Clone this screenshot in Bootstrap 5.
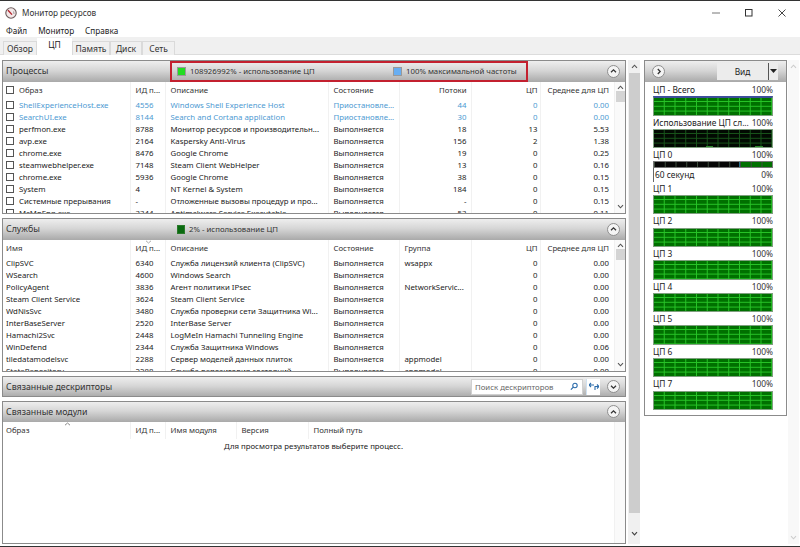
<!DOCTYPE html>
<html lang="ru">
<head>
<meta charset="utf-8">
<title>Монитор ресурсов</title>
<link href="https://cdn.jsdelivr.net/npm/bootstrap@5.3.0/dist/css/bootstrap.min.css" rel="stylesheet">
<style>
html,body{width:800px;height:547px;overflow:hidden;background:#fff}
body{font-family:"Noto Sans","Liberation Sans",sans-serif;font-size:7.8px;line-height:12px;color:#222;border-top:1.5px solid #333;border-bottom:1.5px solid #333}
.win-title{height:23px;padding:0 14px 0 5px;font-size:8.2px;color:#333}
.win-title svg{display:block}
.app-mark{margin-right:5px}
.win-btns{gap:25px}
.win-menu{height:13px;padding-left:6px;gap:11px;font-size:8.2px}
.tab-strip{height:18px;background:#f0f0f0;border-bottom:1px solid #dcdcdc;padding-left:3px}
.tab-strip .nav-tabs{border:0;height:18px;align-items:flex-end;flex-wrap:nowrap}
.tab-strip .nav-link{height:14px;border:1px solid #dadada;border-bottom:0;border-radius:0;margin:0;padding:0;color:#333;font-size:8.5px;line-height:13px;background:#f0f0f0;text-align:center}
.tab-strip .nav-link.active{height:18px;background:#fff;color:#222;border-color:#fff;line-height:12px;padding-bottom:3px;margin-bottom:-1px}
.tw1{width:34px}.tw2{width:35px}.tw3{width:38px}.tw4{width:32px}.tw5{width:33px}
.work{height:489px;padding-top:5px}
.left-pane{width:640px;padding-left:2px;border-right:1px solid #555}
.sec-stack{width:624px;gap:4px}
.sect{border:1px solid #8b8b8b;background:#fff;overflow:hidden;flex:none}
.sect-a{height:154px}.sect-b{height:153.5px}.sect-c{height:21px}.sect-d{flex:1 1 auto}
.sect-head{height:20.5px;background:linear-gradient(#eeeeee,#d6d6d6 45%,#a9a9a9);padding-right:5px;flex:none}
.sect-name{font-size:8.8px;padding-left:3px;width:167px;color:#333;flex:none}
.legend-box{width:358px;height:21px;border:2px solid transparent;padding-left:5px;flex:none;color:#333}
.legend-hot{border-color:#c3202f}
.legend-item{width:216px;gap:4px}
.swatch{width:9px;height:9px;border:1px solid #999;flex:none}
.sw-green{background:#22dc22}
.sw-blue{background:#68aef2}
.sw-dark{background:#0a6a10;border-color:#2a7a2a;width:8px}
.round-btn{width:13px;height:13px;border-radius:50%;border:1px solid #8e8e8e;background:#f4f4f4;flex:none}
.round-btn svg{display:block;margin:2.5px auto}
.sect-body{position:relative;overflow:hidden;flex:1 1 auto;min-height:0}
.tbl-wrap{width:611px;overflow:hidden;flex:none}
.rtab{table-layout:fixed;width:611px;--bs-table-bg:transparent;margin:0;font-size:7.8px;color:#222}
.rtab th,.rtab td{padding:0 0 0 5px;height:12.1px;line-height:12px;white-space:nowrap;overflow:hidden;border-right:1px solid #f1f1f1;color:inherit;font-weight:400;vertical-align:middle}
.rtab th:last-child,.rtab td:last-child{border-right:0}
.rtab thead th{height:17px;padding-bottom:1px;color:#333;position:relative}
.rtab th:first-child,.rtab td:first-child{padding-left:3px}
.rtab .ra{text-align:right;padding-left:0}
.rtab .pa{padding-right:4px}.rtab .pb{padding-right:2px}.rtab .pc{padding-right:5px}
.rtab .form-check-input{width:8px;height:8px;margin:0 5px 0 0;border:1px solid #555;border-radius:0;vertical-align:-1px;float:none}
.rtab tr.sus td{color:#4d9ad2}
.col1{width:127px}.col2{width:35px}.col3{width:163px}.col4{width:71px}.col5{width:72px}.col6{width:69px}.col7{width:74px}
.mcol3{width:71px}.mcol4{width:72px}
.sbar{width:12px;background:#fafafa;border-left:1px solid #f1f1f1;flex:none;padding-top:3px}
.sbar svg{display:block;margin:0 auto}
.sbar-thumb{width:10px;height:11px;background:#d4d4d4;margin:1px auto 0}
.sbar-end{margin-top:auto;padding-bottom:4px}
.hint{height:12px;padding-left:221px;margin-top:1px;color:#222}
.sort-mark{position:absolute;display:block;top:0}
.sm-a{left:14px}.sm-b{left:61px}
.search-box{width:112px;height:16px;background:#fff;border:1px solid #d0d0d0;margin-right:3px}
.search-box .form-control{height:14px;border:0;border-radius:0;background:transparent;padding:0 0 0 3px;font-size:7.8px;line-height:12px;min-height:0;box-shadow:none;color:#555}
.search-box .form-control::placeholder{color:#666;opacity:1}
.swap-btn{width:14px;height:16px;background:#fff;border-left:1px solid #cfe0ef;margin-right:7px;flex:none}
.outer-bar{width:12px;margin-left:2px;background:#f0f0f0;flex:none}
.outer-track{background:#cdcdcd;width:11px;flex:1 1 auto;margin:4px 0 18px}
.right-pane{width:159px;padding-left:4px;flex:none}
.mon{width:143px;height:356px;border:1px solid #8b8b8b;background:#fff;flex:none}
.mon-head{height:20.5px;background:linear-gradient(#eeeeee,#d6d6d6 45%,#a9a9a9);padding:0 9px 0 7px}
.view-btn{width:51px;height:17px;background:#ececec;font-size:8.4px;line-height:17px;text-align:center;color:#222;border:0;padding:0;border-radius:0}
.view-arrow{width:10px;height:17px;background:#ececec;border-left:1.5px solid #555;margin-right:-1px}
.mon-body{padding:1.5px 13px 0 8px}
.gr-label{height:13.3px;line-height:13px;font-size:8.4px;color:#222}
.gr-label span:last-child{color:#333}
.tick-label{border-left:1px solid #666;padding-left:1px}
.gr{height:19.3px;border:1px solid #7fa07f;background-color:#007000;background-image:linear-gradient(90deg,#27c427 1px,transparent 1px),linear-gradient(#27c427 1px,transparent 1px);background-size:10.75px 100%,100% 4.8px;background-position:-1px 0,0 3px}
.gr-top{border-top:2px solid #3e4f9b}
.gr-black{background-color:#020a02;background-image:linear-gradient(90deg,transparent 44%,#2c8a2c 44%,#2c8a2c 50%,transparent 50%,transparent 86%,#2c8a2c 86%,#2c8a2c 92%,transparent 92%),linear-gradient(90deg,#17541a 1px,transparent 1px),linear-gradient(#17541a 1px,transparent 1px);background-size:100% 1px,10.75px 100%,100% 4.8px;background-position:0 100%,-1px 0,0 3px;background-repeat:no-repeat,repeat,repeat}
.gr-thin{height:7px;background-color:transparent;background-image:linear-gradient(90deg,#050505 72%,#2b6f8a 72%,#2b6f8a 73.5%,#007000 73.5%);background-size:100% 100%;background-position:0 0;border-color:#777;overflow:hidden}
.gr-ticks{display:block;height:100%;background-image:linear-gradient(90deg,#3b4b3b 1px,transparent 1px);background-size:10.75px 100%}
.side-bar{width:11px;background:#f8f8f8;margin-left:auto;flex:none;padding:4px 0}
</style>
</head>
<body>
<div class="win-title d-flex align-items-center">
  <svg class="app-mark" width="12" height="12" viewBox="0 0 12 12"><circle cx="6" cy="6" r="5.2" fill="#f3e8e8" stroke="#6b5a5a" stroke-width="1.1"/><path d="M3 3.2 7 7.6" stroke="#b3242c" stroke-width="1.4" fill="none"/><path d="M8.6 4.4 9 7" stroke="#888" stroke-width=".8" fill="none"/></svg>
  <span class="flex-grow-1">Монитор ресурсов</span>
  <div class="win-btns d-flex align-items-center">
    <svg width="8" height="8" viewBox="0 0 8 8"><path d="M0 4h8" stroke="#777" stroke-width="1"/></svg>
    <svg width="8" height="8" viewBox="0 0 8 8"><rect x=".5" y=".5" width="6.5" height="6.5" fill="none" stroke="#333"/></svg>
    <svg width="8" height="8" viewBox="0 0 8 8"><path d="M.5.5l7 7M7.5.5l-7 7" stroke="#333" stroke-width=".9"/></svg>
  </div>
</div>
<div class="win-menu d-flex align-items-center"><span>Файл</span><span>Монитор</span><span>Справка</span></div>
<div class="tab-strip">
  <ul class="nav nav-tabs">
    <li class="nav-item"><a class="nav-link tw1" href="#">Обзор</a></li>
    <li class="nav-item"><a class="nav-link active tw2" href="#">ЦП</a></li>
    <li class="nav-item"><a class="nav-link tw3" href="#">Память</a></li>
    <li class="nav-item"><a class="nav-link tw4" href="#">Диск</a></li>
    <li class="nav-item"><a class="nav-link tw5" href="#">Сеть</a></li>
  </ul>
</div>
<div class="work d-flex">
  <div class="left-pane d-flex flex-none">
    <div class="sec-stack d-flex flex-column">

      <section class="sect sect-a d-flex flex-column">
        <div class="sect-head d-flex align-items-center">
          <div class="sect-name">Процессы</div>
          <div class="legend-box legend-hot d-flex align-items-center">
            <div class="legend-item d-flex align-items-center"><span class="swatch sw-green"></span><span>108926992% - использование ЦП</span></div>
            <div class="d-flex align-items-center gap-1"><span class="swatch sw-blue"></span><span>100% максимальной частоты</span></div>
          </div>
          <span class="round-btn ms-auto"><svg width="7" height="6" viewBox="0 0 7 6"><path d="M1 4.2 3.5 1.8 6 4.2" fill="none" stroke="#333" stroke-width="1.3"/></svg></span>
        </div>
        <div class="sect-body d-flex">
          <div class="tbl-wrap">
            <table class="table table-borderless rtab">
              <colgroup><col class="col1"><col class="col2"><col class="col3"><col class="col4"><col class="col5"><col class="col6"><col class="col7"></colgroup>
              <thead><tr><th><input class="form-check-input" type="checkbox" aria-label="Образ">Образ</th><th>ИД п...</th><th>Описание</th><th>Состояние</th><th class="ra pa">Потоки</th><th class="ra pb">ЦП</th><th class="ra pc">Среднее для ЦП</th></tr></thead>
              <tbody>
                <tr class="sus"><td><input class="form-check-input" type="checkbox" aria-label="выбор">ShellExperienceHost.exe</td><td>4556</td><td>Windows Shell Experience Host</td><td>Приостановле...</td><td class="ra pa">44</td><td class="ra pb">0</td><td class="ra pc">0.00</td></tr>
                <tr class="sus"><td><input class="form-check-input" type="checkbox" aria-label="выбор">SearchUI.exe</td><td>8144</td><td>Search and Cortana application</td><td>Приостановле...</td><td class="ra pa">30</td><td class="ra pb">0</td><td class="ra pc">0.00</td></tr>
                <tr><td><input class="form-check-input" type="checkbox" aria-label="выбор">perfmon.exe</td><td>8788</td><td>Монитор ресурсов и производительн...</td><td>Выполняется</td><td class="ra pa">18</td><td class="ra pb">13</td><td class="ra pc">5.53</td></tr>
                <tr><td><input class="form-check-input" type="checkbox" aria-label="выбор">avp.exe</td><td>2164</td><td>Kaspersky Anti-Virus</td><td>Выполняется</td><td class="ra pa">156</td><td class="ra pb">2</td><td class="ra pc">1.38</td></tr>
                <tr><td><input class="form-check-input" type="checkbox" aria-label="выбор">chrome.exe</td><td>8476</td><td>Google Chrome</td><td>Выполняется</td><td class="ra pa">19</td><td class="ra pb">0</td><td class="ra pc">0.25</td></tr>
                <tr><td><input class="form-check-input" type="checkbox" aria-label="выбор">steamwebhelper.exe</td><td>7148</td><td>Steam Client WebHelper</td><td>Выполняется</td><td class="ra pa">13</td><td class="ra pb">0</td><td class="ra pc">0.16</td></tr>
                <tr><td><input class="form-check-input" type="checkbox" aria-label="выбор">chrome.exe</td><td>5936</td><td>Google Chrome</td><td>Выполняется</td><td class="ra pa">38</td><td class="ra pb">0</td><td class="ra pc">0.15</td></tr>
                <tr><td><input class="form-check-input" type="checkbox" aria-label="выбор">System</td><td>4</td><td>NT Kernel &amp; System</td><td>Выполняется</td><td class="ra pa">184</td><td class="ra pb">0</td><td class="ra pc">0.15</td></tr>
                <tr><td><input class="form-check-input" type="checkbox" aria-label="выбор">Системные прерывания</td><td>-</td><td>Отложенные вызовы процедур и про...</td><td>Выполняется</td><td class="ra pa">-</td><td class="ra pb">0</td><td class="ra pc">0.15</td></tr>
                <tr><td><input class="form-check-input" type="checkbox" aria-label="выбор">McMpEng.exe</td><td>3344</td><td>Antimalware Service Executable</td><td>Выполняется</td><td class="ra pa">53</td><td class="ra pb">0</td><td class="ra pc">0.11</td></tr>
              </tbody>
            </table>
          </div>
          <div class="sbar d-flex flex-column">
            <svg width="7" height="5" viewBox="0 0 7 5"><path d="M1 3.8 3.5 1.2 6 3.8" fill="none" stroke="#555" stroke-width="1.1"/></svg>
            <div class="sbar-thumb"></div>
            <div class="sbar-end"><svg width="7" height="5" viewBox="0 0 7 5"><path d="M1 1.2 3.5 3.8 6 1.2" fill="none" stroke="#555" stroke-width="1.1"/></svg></div>
          </div>
        </div>
      </section>

      <section class="sect sect-b d-flex flex-column">
        <div class="sect-head d-flex align-items-center">
          <div class="sect-name">Службы</div>
          <div class="legend-box d-flex align-items-center">
            <div class="legend-item d-flex align-items-center"><span class="swatch sw-dark"></span><span>2% - использование ЦП</span></div>
          </div>
          <span class="round-btn ms-auto"><svg width="7" height="6" viewBox="0 0 7 6"><path d="M1 4.2 3.5 1.8 6 4.2" fill="none" stroke="#333" stroke-width="1.3"/></svg></span>
        </div>
        <div class="sect-body d-flex">
          <div class="tbl-wrap">
            <table class="table table-borderless rtab">
              <colgroup><col class="col1"><col class="col2"><col class="col3"><col class="col4"><col class="col5"><col class="col6"><col class="col7"></colgroup>
              <thead><tr><th>Имя</th><th>ИД п...<svg class="sort-mark sm-a" width="7" height="4" viewBox="0 0 7 4"><path d="M1 .8 3.5 3 6 .8" fill="none" stroke="#aaa"/></svg></th><th>Описание</th><th>Состояние</th><th>Группа</th><th class="ra pb">ЦП</th><th class="ra pc">Среднее для ЦП</th></tr></thead>
              <tbody>
                <tr><td>ClipSVC</td><td>6340</td><td>Служба лицензий клиента (ClipSVC)</td><td>Выполняется</td><td>wsappx</td><td class="ra pb">0</td><td class="ra pc">0.00</td></tr>
                <tr><td>WSearch</td><td>4600</td><td>Windows Search</td><td>Выполняется</td><td></td><td class="ra pb">0</td><td class="ra pc">0.00</td></tr>
                <tr><td>PolicyAgent</td><td>3836</td><td>Агент политики IPsec</td><td>Выполняется</td><td>NetworkServic...</td><td class="ra pb">0</td><td class="ra pc">0.00</td></tr>
                <tr><td>Steam Client Service</td><td>3624</td><td>Steam Client Service</td><td>Выполняется</td><td></td><td class="ra pb">0</td><td class="ra pc">0.00</td></tr>
                <tr><td>WdNisSvc</td><td>3480</td><td>Служба проверки сети Защитника Wi...</td><td>Выполняется</td><td></td><td class="ra pb">0</td><td class="ra pc">0.00</td></tr>
                <tr><td>InterBaseServer</td><td>2520</td><td>InterBase Server</td><td>Выполняется</td><td></td><td class="ra pb">0</td><td class="ra pc">0.00</td></tr>
                <tr><td>Hamachi2Svc</td><td>2448</td><td>LogMeIn Hamachi Tunneling Engine</td><td>Выполняется</td><td></td><td class="ra pb">0</td><td class="ra pc">0.00</td></tr>
                <tr><td>WinDefend</td><td>2344</td><td>Служба Защитника Windows</td><td>Выполняется</td><td></td><td class="ra pb">0</td><td class="ra pc">0.06</td></tr>
                <tr><td>tiledatamodelsvc</td><td>2288</td><td>Сервер моделей данных плиток</td><td>Выполняется</td><td>appmodel</td><td class="ra pb">0</td><td class="ra pc">0.00</td></tr>
                <tr><td>StateRepository</td><td>2288</td><td>Служба репозитория состояний</td><td>Выполняется</td><td>appmodel</td><td class="ra pb">0</td><td class="ra pc">0.00</td></tr>
              </tbody>
            </table>
          </div>
          <div class="sbar d-flex flex-column">
            <svg width="7" height="5" viewBox="0 0 7 5"><path d="M1 3.8 3.5 1.2 6 3.8" fill="none" stroke="#555" stroke-width="1.1"/></svg>
            <div class="sbar-thumb"></div>
            <div class="sbar-end"><svg width="7" height="5" viewBox="0 0 7 5"><path d="M1 1.2 3.5 3.8 6 1.2" fill="none" stroke="#555" stroke-width="1.1"/></svg></div>
          </div>
        </div>
      </section>

      <section class="sect sect-c d-flex flex-column">
        <div class="sect-head d-flex align-items-center">
          <div class="sect-name">Связанные дескрипторы</div>
          <div class="search-box d-flex align-items-center ms-auto">
            <input class="form-control" type="text" placeholder="Поиск дескрипторов" aria-label="Поиск дескрипторов">
            <svg class="me-1 flex-none" width="9" height="9" viewBox="0 0 9 9"><circle cx="5.6" cy="3.4" r="2.5" fill="none" stroke="#2c6cab" stroke-width="1.2"/><path d="M3.8 5.2 1 8" stroke="#2c6cab" stroke-width="1.4"/></svg>
          </div>
          <div class="swap-btn d-flex align-items-center justify-content-center"><svg width="10" height="9" viewBox="0 0 10 9"><path d="M0 3h5M2 1 0 3l2 2M10 4.500H5.500M8 2.500l2 2-2 2M6 4.500V8" fill="none" stroke="#2c6cab" stroke-width="1.1"/></svg></div>
          <span class="round-btn"><svg width="7" height="6" viewBox="0 0 7 6"><path d="M1 1.800 3.500 4.200 6 1.800" fill="none" stroke="#333" stroke-width="1.3"/></svg></span>
        </div>
      </section>

      <section class="sect sect-d d-flex flex-column">
        <div class="sect-head d-flex align-items-center">
          <div class="sect-name">Связанные модули</div>
          <span class="round-btn ms-auto"><svg width="7" height="6" viewBox="0 0 7 6"><path d="M1 4.200 3.500 1.800 6 4.200" fill="none" stroke="#333" stroke-width="1.3"/></svg></span>
        </div>
        <div class="sect-body d-flex">
          <div class="tbl-wrap">
            <table class="table table-borderless rtab">
              <colgroup><col class="col1"><col class="col2"><col class="mcol3"><col class="mcol4"><col></colgroup>
              <thead><tr><th>Образ<svg class="sort-mark sm-b" width="7" height="4" viewBox="0 0 7 4"><path d="M1 3.200 3.500 1 6 3.200" fill="none" stroke="#888"/></svg></th><th>ИД п...</th><th>Имя модуля</th><th>Версия</th><th>Полный путь</th></tr></thead>
            </table>
            <div class="hint">Для просмотра результатов выберите процесс.</div>
          </div>
          <div class="sbar"></div>
        </div>
      </section>
    </div>
    <div class="outer-bar d-flex flex-column align-items-center">
      <svg class="mt-1" width="7" height="5" viewBox="0 0 7 5"><path d="M1 3.800 3.500 1.200 6 3.800" fill="none" stroke="#555" stroke-width="1.1"/></svg>
      <div class="outer-track"></div>
      <svg class="mb-2" width="7" height="5" viewBox="0 0 7 5"><path d="M1 1.200 3.500 3.800 6 1.200" fill="none" stroke="#444" stroke-width="1.2"/></svg>
    </div>
  </div>

  <div class="right-pane d-flex">
    <div class="mon">
      <div class="mon-head d-flex align-items-center">
        <span class="round-btn"><svg width="6" height="7" viewBox="0 0 6 7"><path d="M1.800 1 4.200 3.500 1.800 6" fill="none" stroke="#333" stroke-width="1.3"/></svg></span>
        <button class="view-btn ms-auto" type="button">Вид</button>
        <span class="view-arrow d-flex align-items-center justify-content-center"><svg width="7" height="4" viewBox="0 0 7 4"><path d="M0 0h7L3.500 4z" fill="#222"/></svg></span>
      </div>
      <div class="mon-body">
        <div class="gr-label d-flex justify-content-between"><span>ЦП - Всего</span><span>100%</span></div>
        <div class="gr gr-top"></div>
        <div class="gr-label d-flex justify-content-between"><span>Использование ЦП сл...</span><span>100%</span></div>
        <div class="gr gr-black"></div>
        <div class="gr-label d-flex justify-content-between"><span>ЦП 0</span><span>100%</span></div>
        <div class="gr gr-thin"><span class="gr-ticks"></span></div>
        <div class="gr-label d-flex justify-content-between"><span class="tick-label">60 секунд</span><span>0%</span></div>
        <div class="gr-label d-flex justify-content-between"><span>ЦП 1</span><span>100%</span></div>
        <div class="gr"></div>
        <div class="gr-label d-flex justify-content-between"><span>ЦП 2</span><span>100%</span></div>
        <div class="gr"></div>
        <div class="gr-label d-flex justify-content-between"><span>ЦП 3</span><span>100%</span></div>
        <div class="gr"></div>
        <div class="gr-label d-flex justify-content-between"><span>ЦП 4</span><span>100%</span></div>
        <div class="gr"></div>
        <div class="gr-label d-flex justify-content-between"><span>ЦП 5</span><span>100%</span></div>
        <div class="gr"></div>
        <div class="gr-label d-flex justify-content-between"><span>ЦП 6</span><span>100%</span></div>
        <div class="gr"></div>
        <div class="gr-label d-flex justify-content-between"><span>ЦП 7</span><span>100%</span></div>
        <div class="gr"></div>
      </div>
    </div>
    <div class="side-bar d-flex flex-column align-items-center justify-content-between">
      <svg width="7" height="5" viewBox="0 0 7 5"><path d="M1 3.800 3.500 1.200 6 3.800" fill="none" stroke="#ccc" stroke-width="1.1"/></svg>
      <svg width="7" height="5" viewBox="0 0 7 5"><path d="M1 1.200 3.500 3.800 6 1.200" fill="none" stroke="#ccc" stroke-width="1.1"/></svg>
    </div>
  </div>
</div>
</body>
</html>
